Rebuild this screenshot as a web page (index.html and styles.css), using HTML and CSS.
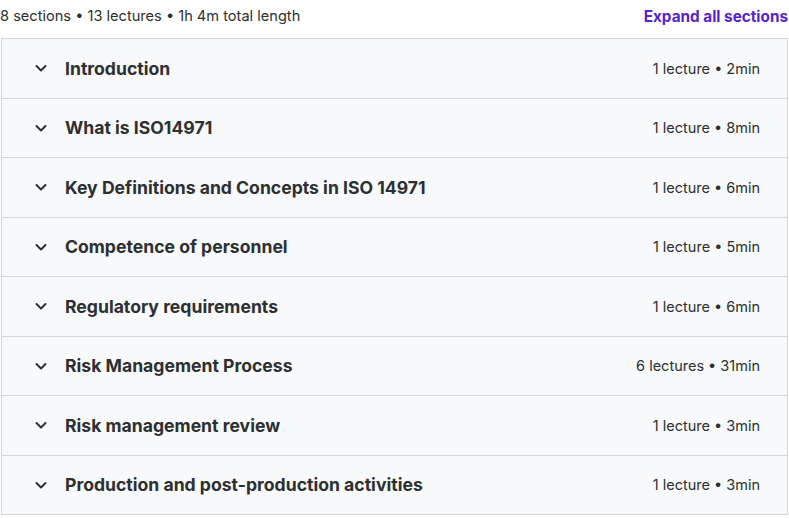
FILE: index.html
```html
<!DOCTYPE html>
<html>
<head>
<meta charset="utf-8">
<link rel="stylesheet" href="styles.css">
</head>
<body>
<div class="curriculum">
  <div class="summary">
    <span class="stats">8 sections • 13 lectures • 1h 4m total length</span>
    <button class="expand">Expand all sections</button>
  </div>
  <div class="sections">
    <div class="section"><span class="chev"><svg viewBox="0 0 16 16" width="16" height="16"><path d="M3.5 6l4.5 4.5 4.5-4.5" fill="none" stroke="#2d2f31" stroke-width="2" stroke-linecap="round" stroke-linejoin="round"/></svg></span><span class="title">Introduction</span><span class="meta">1 lecture • 2min</span></div>
    <div class="section"><span class="chev"><svg viewBox="0 0 16 16" width="16" height="16"><path d="M3.5 6l4.5 4.5 4.5-4.5" fill="none" stroke="#2d2f31" stroke-width="2" stroke-linecap="round" stroke-linejoin="round"/></svg></span><span class="title">What is ISO14971</span><span class="meta">1 lecture • 8min</span></div>
    <div class="section"><span class="chev"><svg viewBox="0 0 16 16" width="16" height="16"><path d="M3.5 6l4.5 4.5 4.5-4.5" fill="none" stroke="#2d2f31" stroke-width="2" stroke-linecap="round" stroke-linejoin="round"/></svg></span><span class="title">Key Definitions and Concepts in ISO 14971</span><span class="meta">1 lecture • 6min</span></div>
    <div class="section"><span class="chev"><svg viewBox="0 0 16 16" width="16" height="16"><path d="M3.5 6l4.5 4.5 4.5-4.5" fill="none" stroke="#2d2f31" stroke-width="2" stroke-linecap="round" stroke-linejoin="round"/></svg></span><span class="title">Competence of personnel</span><span class="meta">1 lecture • 5min</span></div>
    <div class="section"><span class="chev"><svg viewBox="0 0 16 16" width="16" height="16"><path d="M3.5 6l4.5 4.5 4.5-4.5" fill="none" stroke="#2d2f31" stroke-width="2" stroke-linecap="round" stroke-linejoin="round"/></svg></span><span class="title">Regulatory requirements</span><span class="meta">1 lecture • 6min</span></div>
    <div class="section"><span class="chev"><svg viewBox="0 0 16 16" width="16" height="16"><path d="M3.5 6l4.5 4.5 4.5-4.5" fill="none" stroke="#2d2f31" stroke-width="2" stroke-linecap="round" stroke-linejoin="round"/></svg></span><span class="title">Risk Management Process</span><span class="meta">6 lectures • 31min</span></div>
    <div class="section"><span class="chev"><svg viewBox="0 0 16 16" width="16" height="16"><path d="M3.5 6l4.5 4.5 4.5-4.5" fill="none" stroke="#2d2f31" stroke-width="2" stroke-linecap="round" stroke-linejoin="round"/></svg></span><span class="title">Risk management review</span><span class="meta">1 lecture • 3min</span></div>
    <div class="section"><span class="chev"><svg viewBox="0 0 16 16" width="16" height="16"><path d="M3.5 6l4.5 4.5 4.5-4.5" fill="none" stroke="#2d2f31" stroke-width="2" stroke-linecap="round" stroke-linejoin="round"/></svg></span><span class="title">Production and post-production activities</span><span class="meta">1 lecture • 3min</span></div>
  </div>
</div>
</body>
</html>
```
FILE: styles.css
```css
html, body {
  margin: 0;
  padding: 0;
  background: #ffffff;
}
body {
  font-family: Inter, "Noto Sans", "Liberation Sans", sans-serif;
  color: #2d2f31;
  width: 789px;
}
.summary {
  display: flex;
  justify-content: space-between;
  align-items: center;
  height: 32px;
  margin-bottom: 6px;
}
.stats {
  font-size: 14.6px;
  color: #2d2f31;
}
.expand {
  background: none;
  border: none;
  padding: 0;
  margin-right: 1px;
  font-family: inherit;
  font-size: 15.3px;
  font-weight: 700;
  color: #5624d0;
  cursor: pointer;
}
.sections {
  margin-left: 1px;
  width: 787px;
  border: 1px solid #d1d7dc;
  border-top: none;
  box-sizing: border-box;
}
.section {
  display: flex;
  align-items: center;
  box-sizing: border-box;
  height: 59.5px;
  border-top: 1px solid #d1d7dc;
  background: #f7f9fa;
  padding: 0 27px 0 31px;
}
.chev {
  display: flex;
  width: 16px;
  height: 16px;
  margin-right: 16px;
}
.title {
  font-size: 17.6px;
  font-weight: 700;
  flex: 1;
}
.meta {
  font-size: 14.5px;
}
```
